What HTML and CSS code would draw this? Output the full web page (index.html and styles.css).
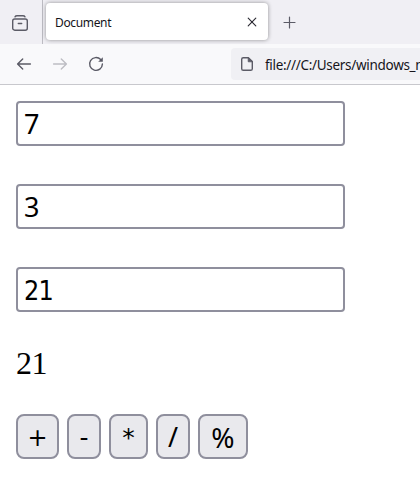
FILE: index.html
```html
<!DOCTYPE html>
<html lang="en">
<head>
<meta charset="utf-8">
<title>Document</title>
<link rel="stylesheet" href="styles.css">
</head>
<body>
<header class="tabs">
  <div class="recent">
    <svg width="18" height="18" viewBox="0 0 18 18" fill="none" stroke="#5b5b66" stroke-width="1.4" stroke-linecap="round">
      <path d="M4 2.8 Q4.6 1.7 6 1.7 H12 Q13.4 1.7 14 2.8"/><rect x="1.7" y="5" width="14.6" height="11.2" rx="2"/><path d="M7.3 9.5 H10.7"/>
    </svg>
  </div>
  <div class="tab">
    <span>Document</span>
    <svg width="10" height="10" viewBox="0 0 10 10" stroke="#2b2a33" stroke-width="1.15" stroke-linecap="round"><path d="M1.2 1.2 L8.8 8.8 M8.8 1.2 L1.2 8.8"/></svg>
  </div>
  <svg class="plus" width="13" height="13" viewBox="0 0 13 13" stroke="#5b5b66" stroke-width="1.2" stroke-linecap="round"><path d="M6.5 1 V12 M1 6.5 H12"/></svg>
</header>
<nav class="toolbar">
  <svg width="16" height="16" viewBox="0 0 16 16" fill="none" stroke="#5b5b66" stroke-width="1.4" stroke-linecap="round" stroke-linejoin="round"><path d="M14.4 8 H1.8 M6.7 2.9 L1.6 8 L6.7 13.1"/></svg>
  <svg class="forward" width="16" height="16" viewBox="0 0 16 16" fill="none" stroke="#bdbdc3" stroke-width="1.4" stroke-linecap="round" stroke-linejoin="round"><path d="M1.6 8 H14.2 M9.3 2.9 L14.4 8 L9.3 13.1"/></svg>
  <svg class="reload" width="16" height="16" viewBox="0 0 16 16" fill="none" stroke="#5b5b66" stroke-width="1.4" stroke-linecap="round"><path d="M12.7 3.6 A6.4 6.4 0 1 0 14.4 8"/><path d="M14.8 1.2 V5.8 H10.2 Z" fill="#5b5b66" stroke="none"/></svg>
  <div class="address">
    <svg width="14" height="16" viewBox="0 0 14 16" fill="none" stroke="#5b5b66" stroke-width="1.4" stroke-linejoin="round"><path d="M8.4 1.7 H3.3 Q1.7 1.7 1.7 3.3 V12.7 Q1.7 14.3 3.3 14.3 H10.7 Q12.3 14.3 12.3 12.7 V5.6 Z"/><path d="M8.2 1.7 V5.8 H12.3 Z" fill="#5b5b66" stroke-width=".8"/></svg>
    <span>file:///C:/Users/windows_n</span>
  </div>
</nav>
<main class="page">
  <input class="field" value="7">
  <input class="field" value="3">
  <input class="field total" value="21">
  <div class="result">21</div>
  <div class="keys">
    <button class="key add">+</button>
    <button class="key sub">-</button>
    <button class="key mul">*</button>
    <button class="key div">/</button>
    <button class="key mod">%</button>
  </div>
</main>
</body>
</html>
```
FILE: styles.css
```css
* { box-sizing: border-box; }
body { margin: 0; width: 420px; height: 491px; overflow: hidden; background: #fff; }
svg { display: block; flex: none; }
.tabs { display: flex; height: 44px; background: #f0eff4; font: 12px "Noto Sans", sans-serif; color: #15141a; }
.recent { width: 43px; border-right: 1px solid #bcbbc2; padding: 14px 0 0 11px; flex: none; }
.tab { width: 222px; height: 37px; margin: 3px 0 0 3px; padding: 0 11px 0 9px; display: flex; align-items: center; justify-content: space-between; border-radius: 4px; background: #fff; box-shadow: 0 0 4px rgba(0,0,0,.4); flex: none; }
.tab span { letter-spacing: -.35px; padding-top: 2px; }
.plus { margin: 16px 0 0 15px; }
.toolbar { display: flex; align-items: center; height: 41px; padding-left: 16px; background: #f9f9fb; border-bottom: 1px solid #c8c8cd; overflow: hidden; }
.forward { margin-left: 20px; }
.reload { margin-left: 20px; }
.address { display: flex; align-items: center; flex: none; width: 200px; height: 32px; margin-left: 127px; padding-left: 9px; border-radius: 4px 0 0 4px; background: #f0f0f4; font: 13.5px "Noto Sans", sans-serif; color: #15141a; white-space: nowrap; overflow: hidden; }
.address span { margin-left: 11px; padding-top: 2px; letter-spacing: -.3px; }
.page { padding: 16px; }
.field { display: block; width: 329px; height: 45px; margin: 0 0 38px; padding: 0 6px 1px; border: 2px solid #8f8f9d; border-radius: 4px; background: #fff; color: #000; font: 27px "Noto Sans", sans-serif; letter-spacing: -.8px; outline: none; }
.total { padding: 1px 6px 0; font-family: "DejaVu Sans Condensed", "DejaVu Sans", sans-serif; font-size: 26.67px; }
.result { height: 37px; margin-top: -5px; font: 32px/37px "Liberation Serif", serif; letter-spacing: -.4px; color: #000; }
.keys { display: flex; gap: 8px; margin-top: 32px; }
.key { height: 45px; padding: 0; border: 2px solid #8f8f9d; border-radius: 8px; background: #e9e9ed; color: #000; font: 27px "Noto Sans", sans-serif; }
.add, .sub, .mul { font-family: "DejaVu Sans", sans-serif; font-size: 25px; padding-top: 1px; }
.add { width: 43px; font-size: 24px; padding-top: 2px; }
.sub { width: 34px; }
.mul { width: 39px; }
.div { width: 34px; }
.mod { width: 50px; font-size: 28px; }
```
